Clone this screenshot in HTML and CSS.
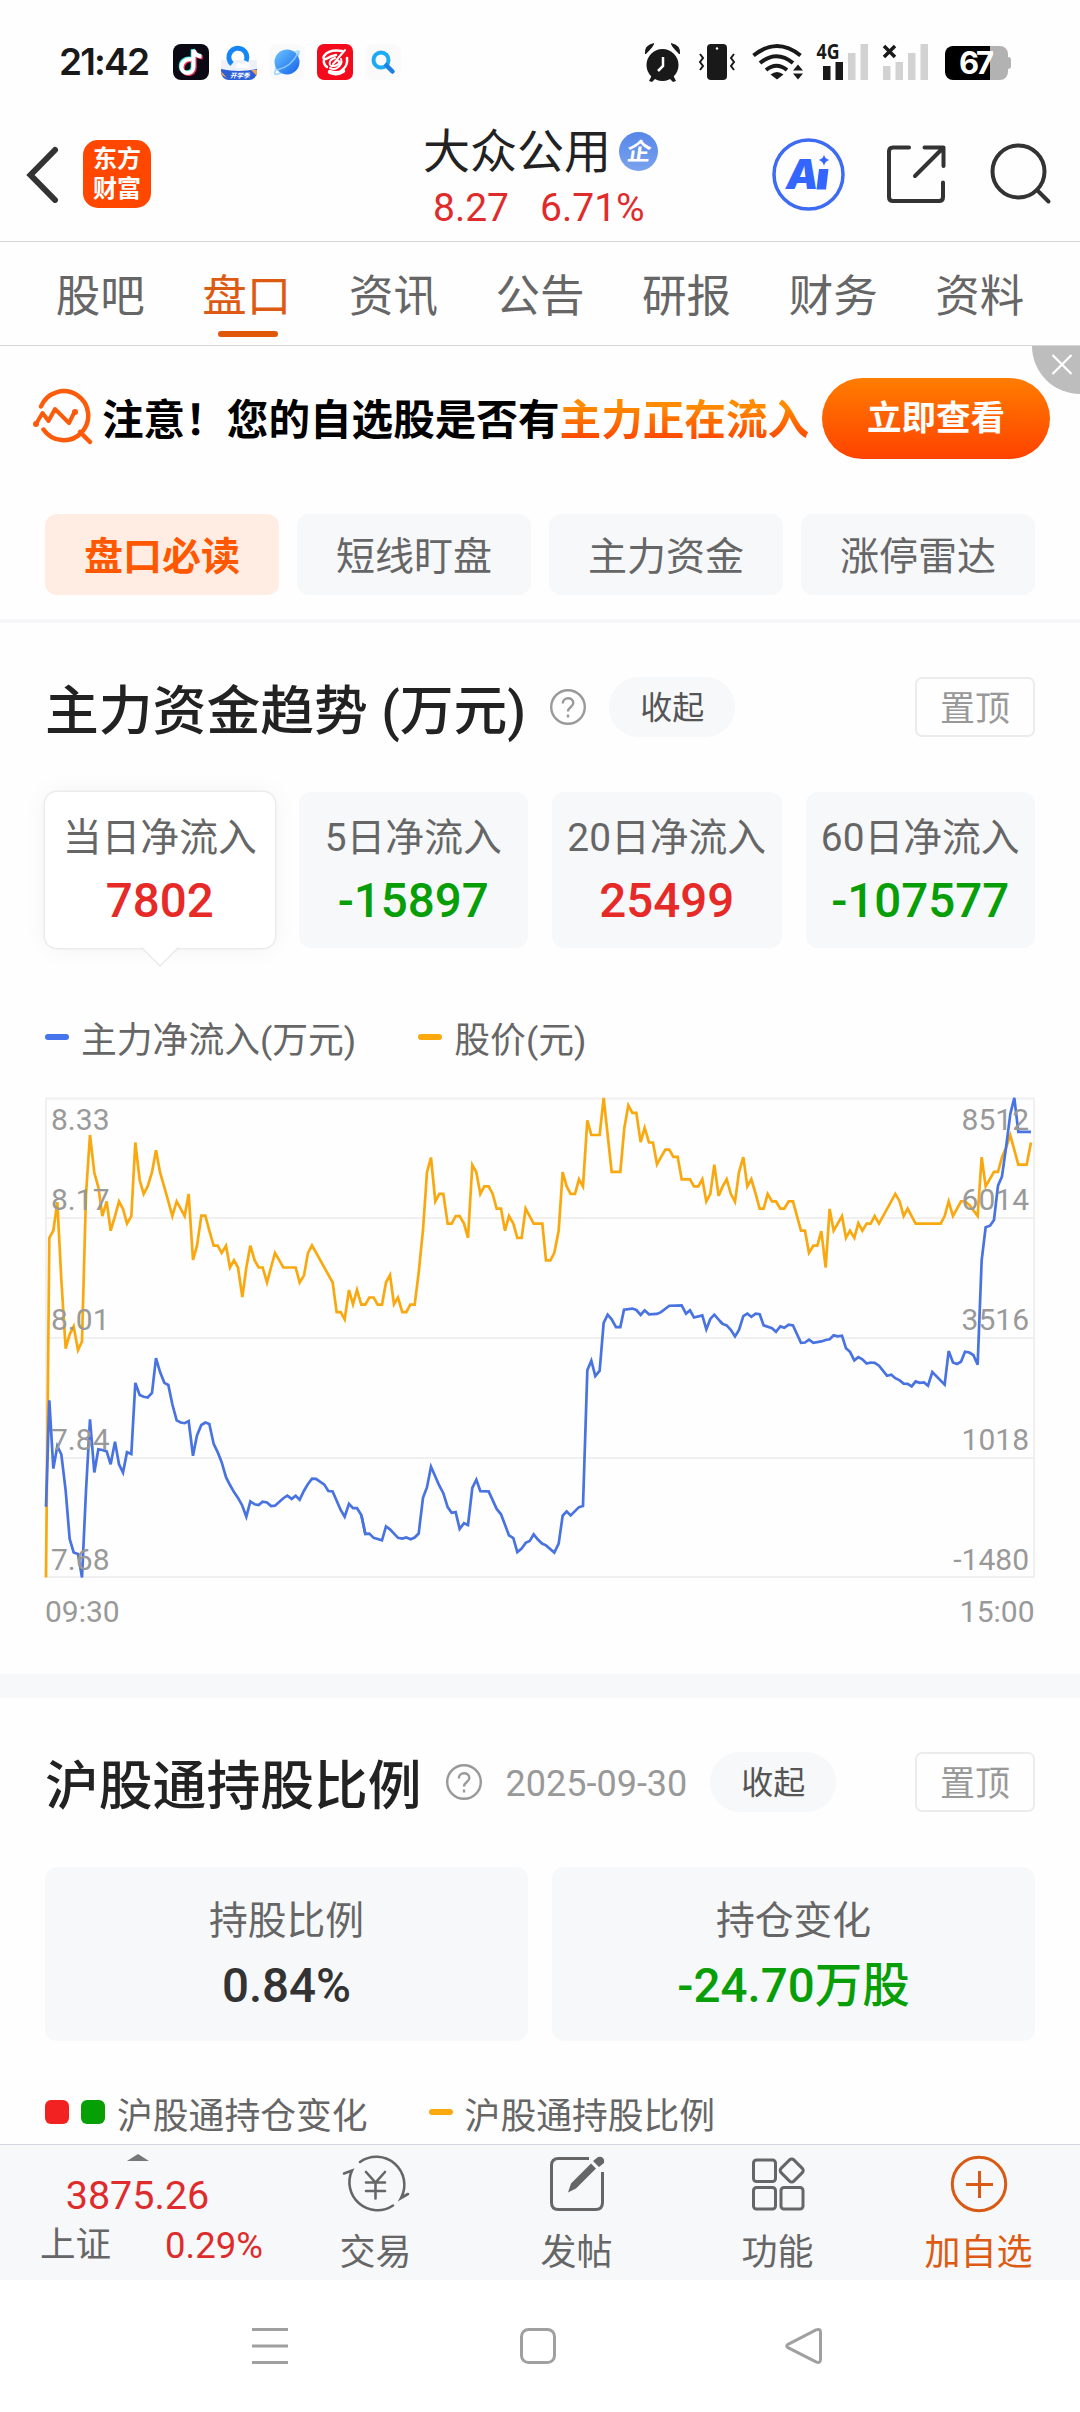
FILE: index.html
```html
<!DOCTYPE html>
<html lang="zh-CN">
<head>
<meta charset="utf-8">
<title>大众公用</title>
<link rel="stylesheet" href="styles.css">
</head>
<body>
<div class="phone">
  <div class="status">
    <span class="clock">21:42</span>
    <div class="notices">
      <svg width="36" height="36" viewBox="0 0 36 36"><rect width="36" height="36" rx="8" fill="#0b0a14"/><g fill="none" stroke-width="4"><path d="M18.500 15.500c-6-1-10 3-10 7.500 0 8 12 8 12 0V6c1 4 4 6 8 6.500" stroke="#2de0dc" transform="translate(-.8 -.8)"/><path d="M18.500 15.500c-6-1-10 3-10 7.500 0 8 12 8 12 0V6c1 4 4 6 8 6.500" stroke="#f5315a" transform="translate(1.200 1)"/><path d="M18.500 15.500c-6-1-10 3-10 7.500 0 8 12 8 12 0V6c1 4 4 6 8 6.500" stroke="#fff"/></g></svg>
      <svg width="36" height="36" viewBox="0 0 36 36"><path d="M0 16h36v12H0z" fill="#eef1f8"/><path d="M11 20a9 9 0 1 1 14-3" fill="none" stroke="#1686f5" stroke-width="5"/><path d="M15 24c-1-5 5-6 6-3 2-5 9-3 8 3z" fill="#fff"/><path d="M0 25q18 4 36 0v3a8 8 0 0 1-8 8H8a8 8 0 0 1-8-8z" fill="#2a5fd6"/><path d="M30 26l6 6v-6zM0 27l6 7-5-3z" fill="#f2a05a"/><text x="9" y="34" font-size="6.500" font-weight="700" font-style="italic" fill="#fff">开学季</text></svg>
      <svg width="36" height="36" viewBox="0 0 36 36"><defs><linearGradient id="planet" x1="0" y1="0" x2="1" y2="1"><stop offset="0" stop-color="#6cc6ff"/><stop offset="1" stop-color="#1360ea"/></linearGradient></defs><rect width="36" height="36" rx="8" fill="#fafafa"/><path d="M25 9q5-3 5-1t-4 8M8 23q-3 6-2 7t8-2" fill="none" stroke="#a9dafa" stroke-width="2"/><circle cx="18" cy="18" r="12.500" fill="url(#planet)"/><path d="M8 26Q22 23 29 9" fill="none" stroke="#8dccff" stroke-width="1.500"/></svg>
      <svg width="36" height="36" viewBox="0 0 36 36"><rect width="36" height="36" rx="7" fill="#f30a1c"/><g fill="none" stroke="#fff" stroke-linecap="round"><path d="M25 7Q12 5 7 12q-2 3 2 3 5-3 10-4" stroke-width="2.500"/><path d="M7 16q-1 4 3 7M30 14q1 8-5 12" stroke-width="2.500"/><path d="M13 28q7 3 13-1" stroke-width="4.500"/><path d="M18 14c-7 2-7 9-1 8s7-7 2-5l-3 3M28 6L17 19M24 15q2 5-4 9-3 2-7 0" stroke-width="2"/></g></svg>
      <svg width="36" height="36" viewBox="0 0 36 36"><rect width="36" height="36" rx="8" fill="#fafafa"/><circle cx="16" cy="16" r="7.500" fill="none" stroke="#1eaaf2" stroke-width="4"/><path d="M21.500 21.500l6 6" stroke="#1c7fe6" stroke-width="4.500" stroke-linecap="round"/></svg>
    </div>
    <svg class="sys" width="370" height="60" viewBox="642 32 370 60">
      <g fill="#191919"><circle cx="662.500" cy="65" r="16"/><path d="M645 54q-1-9 9-11 1 2-8 11zM680 54q1-9-9-11-1 2 8 11z"/><path d="M652 75l4 3-4 4-3-1zM673 75l-4 3 4 4 3-1z"/><rect x="707" y="44" width="20" height="36" rx="4"/></g>
      <path d="M663 57v9l-5 5" fill="none" stroke="#fff" stroke-width="2.500"/><circle cx="717" cy="48.500" r="1.200" fill="#fff"/>
      <path d="M700 54l3 4-3 4 3 4-3 4M734 54l-3 4 3 4-3 4 3 4" fill="none" stroke="#191919" stroke-width="2"/>
      <g fill="none" stroke="#191919" stroke-width="4"><path d="M753.500 55.500q23.500-19 47 0M760 63q16.500-13.500 33 0M766 70q10.500-8.500 21 0"/></g>
      <path d="M770.500 74.500q6.500-5 13 0l-6.500 5zM793 70.500l5-6 5 6zM793 73.500l5 6 5-6z" fill="#191919"/>
      <text x="816.500" y="59" class="net" textLength="23" lengthAdjust="spacingAndGlyphs">4G</text>
      <path d="M823 66h7.500v14H823zM835.500 62h7.500v18h-7.500z" fill="#191919"/>
      <path d="M848 53h7.500v27H848zM860.500 44h7.500v36h-7.500zM883 66h7.500v14H883zM895.500 62h7.500v18h-7.500zM908 53h7.500v27H908zM920.500 44h7.500v36h-7.500z" fill="#d2d2d2"/>
      <path d="M884 46l11 11M895 46l-11 11" stroke="#191919" stroke-width="3.500"/>
      <path d="M990 46h10a8 8 0 0 1 8 8v3q3 0 3 3v6q0 3-3 3v3a8 8 0 0 1-8 8h-10z" fill="#b2b2b2"/><path d="M953 46h37v34h-37a8 8 0 0 1-8-8V54a8 8 0 0 1 8-8z" fill="#000"/>
      <text x="959" y="74" class="batt" textLength="35">67</text>
    </svg>
  </div>

  <header class="head">
    <svg class="back" width="34" height="58" viewBox="0 0 34 58"><path d="M30 5L5.500 30 30 55" fill="none" stroke="#333" stroke-width="6" stroke-linecap="round"/></svg>
    <div class="app"><span>东方</span><span>财富</span></div>
    <div class="stock">
      <div class="name">大众公用<i class="corp"><b>企</b></i></div>
      <div class="price"><span>8.27</span><span>6.71%</span></div>
    </div>
    <svg class="tools" width="284" height="76" viewBox="770 136 284 76">
      <circle cx="808.500" cy="174.500" r="34.500" fill="none" stroke="#3d6bf2" stroke-width="3.500"/>
      <text x="786" y="188.500" class="ai">A</text><path d="M819 169h9.500l-2.500 20.500h-9.500zM824 154.500q1 4.500 5.500 5.500-4.500 1-5.500 6-1-5-5.500-6 4.500-1 5.500-5.500z" fill="#3366ff"/>
      <g fill="none" stroke="#333" stroke-width="4" stroke-linecap="round" stroke-linejoin="round"><path d="M909 147.500h-16q-4 0-4 4V197q0 4 4 4h46q4 0 4-4v-14.500M924.500 147.500h19V166M943 148l-28 28"/><circle cx="1018.500" cy="171.500" r="26"/><path d="M1037 190l11.500 11.500"/></g>
    </svg>
  </header>

  <nav class="tabs"><a>股吧</a><a class="on">盘口</a><a>资讯</a><a>公告</a><a>研报</a><a>财务</a><a>资料</a></nav>

  <div class="banner">
    <svg class="scan" width="62" height="60" viewBox="32 388 62 60"><g fill="none" stroke="#fa5c0c" stroke-width="4.500" stroke-linecap="round" stroke-linejoin="round"><path d="M41 407.500a24.500 24.500 0 1 1 2.500 23M80 433l10 10"/><path d="M36 425l6.500-11 6 8 6.500-12 14 14 5.500-11" stroke-width="4"/></g><g fill="#fa5c0c"><circle cx="36" cy="425" r="3"/><circle cx="75" cy="413" r="3"/></g></svg>
    <p>注意！您的自选股是否有<em>主力正在流入</em></p>
    <span class="go">立即查看</span>
    <svg class="close" width="48" height="48" viewBox="0 0 48 48"><path d="M0 0h48v48A48 48 0 0 1 0 0z" fill="#bdbdbd"/><path d="M20.500 9l19 19M39.500 9l-19 19" stroke="#fff" stroke-width="2.200"/></svg>
  </div>

  <div class="chips"><span class="on">盘口必读</span><span>短线盯盘</span><span>主力资金</span><span>涨停雷达</span></div>

  <section class="trend">
    <div class="title"><h2>主力资金趋势 (万元)</h2><svg class="help" viewBox="0 0 36 36"><circle cx="18" cy="18" r="16.800"/><path d="M12.800 14.500c0-7 10.500-7 10.500-.5 0 4-5.300 4-5.300 8.500M18 25.500v3"/></svg><span class="fold">收起</span><span class="pin">置顶</span></div>
    <div class="flows">
      <div class="card on"><label>当日净流入</label><b class="up">7802</b><svg class="tip" width="38" height="20" viewBox="0 0 38 20"><path d="M0 0h38L19 18z" fill="#fff"/><path d="M0 1l1 0 18 18L37 1h1" fill="none" stroke="#e9e9e9" stroke-width="1.300"/></svg></div>
      <div class="card"><label>5日净流入</label><b class="down">-15897</b></div>
      <div class="card"><label>20日净流入</label><b class="up">25499</b></div>
      <div class="card"><label>60日净流入</label><b class="down">-107577</b></div>
    </div>
    <div class="legend"><i class="dash blue"></i><span>主力净流入(万元)</span><i class="dash gold second"></i><span>股价(元)</span></div>
    <svg class="chart" width="1080" height="560" viewBox="0 0 1080 560">
      <path d="M45 138H1035M45 258H1035M45 378H1035M46 18.500H1034V497H46z" fill="none" stroke="#f0f0f0" stroke-width="2"/>
      <g class="line" stroke="#f9a90f" transform="scale(.33333 .35714)">
        <polyline points="138,1393 148,442 160,422 172,342 184,560 197,752 209,712 221,690 234,756 246,732 258,320 270,154 283,260 295,300 307,381 320,340 332,422 345,381 357,340 369,361 381,402 394,381 406,175 419,280 431,319 443,298 456,258 468,197 480,258 493,300 505,340 517,381 530,340 542,360 554,381 566,319 579,504 591,464 604,380 616,380 628,422 641,464 653,464 665,484 678,464 690,525 702,505 714,525 727,608 739,525 751,464 764,505 776,525 788,525 801,567 813,525 825,484 838,505 850,525 887,525 899,567 912,547 924,484 936,463 998,567 1010,650 1022,650 1034,670 1047,588 1059,628 1071,588 1084,629 1096,629"/>
        <polyline transform="translate(1080)" points="4,629 16,629 28,609 41,609 53,629 66,629 78,567 90,546 102,628 114,609 127,650 139,650 151,629 164,629 176,540 189,420 201,258 213,217 226,340 238,319 250,319 263,402 275,402 287,381 299,381 312,402 324,442 337,238 349,258 361,319 373,298 386,298 398,319 410,360 423,360 435,422 447,381 460,402 472,442 485,442 497,360 509,381 521,402 547,402 558,505 571,505 583,484 596,422 608,258 620,298 632,319 645,319 657,278 669,298 682,113 694,154 719,154 731,50 743,154 755,257 781,257 793,134 805,71 817,92 829,92 842,174 854,134 867,175 879,175 891,236 903,216 916,195 928,195 940,215 953,215 965,278 990,278 1002,298 1015,298 1027,278 1039,340 1051,319 1063,237 1076,325"/>
        <polyline transform="translate(2160)" points="-4,325 8,298 20,278 33,320 45,341 57,258 70,216 82,298 94,278 107,319 119,360 131,360 143,319 156,340 168,340 181,360 193,360 206,340 219,340 231,381 243,422 255,422 267,484 280,464 292,464 304,423 317,525 329,361 341,422 366,381 378,442 390,422 403,442 415,401 427,422 440,402 452,402 464,381 477,402 526,319 539,340 551,381 563,360 587,402 662,402 674,381 686,340 699,381 723,340 735,340 748,350 773,381 785,216 797,298 822,257 834,257 846,216 858,190 871,155 895,237 920,237 933,175"/>
      </g>
      <g class="line" stroke="#4873e0" transform="scale(.33333 .35714)">
        <polyline points="138,1195 148,897 160,1088 172,1025 184,1048 197,1150 209,1285 221,1323 234,1327 246,1393 258,1150 270,950 283,1099 295,1034 307,1036 320,1040 332,1076 345,1013 357,1076 369,1099 381,1042 394,1047 406,848 419,882 431,887 443,889 456,876 468,779 480,817 493,848 505,854 517,908 530,953 542,959 554,961 566,955 579,1052 591,995 604,966 616,959 628,963 641,1019 653,1042 665,1070 678,1112 690,1134 702,1154 714,1170 727,1192 739,1223 751,1180 764,1188 776,1190 788,1181 801,1183 813,1193 825,1192 850,1171 862,1164 875,1173 887,1164 899,1175 912,1150 924,1131 936,1116 948,1117 973,1133 985,1151 998,1152 1010,1178 1022,1204 1034,1223 1047,1187 1059,1199 1071,1199 1084,1218 1096,1271"/>
        <polyline transform="translate(1080)" points="4,1218 16,1271 28,1270 41,1282 66,1289 78,1250 90,1258 114,1282 127,1284 139,1281 152,1286 164,1281 176,1270 189,1170 201,1140 213,1083 238,1136 250,1157 263,1196 275,1212 287,1210 299,1257 312,1241 324,1246 337,1142 349,1119 361,1151 386,1152 410,1201 423,1216 435,1245 447,1275 460,1283 472,1322 484,1313 497,1296 509,1291 521,1272 533,1286 546,1298 558,1303 583,1323 596,1298 608,1220 620,1208 632,1219 657,1196 669,1193 682,813 694,786 706,829 719,814 731,680 743,657 755,670 768,692 781,692 792,643 817,640 829,644 842,658 854,645 867,656 891,655 903,650 928,632 965,631 978,654 990,645 1002,665 1027,659 1039,698 1051,669 1063,657 1080,675 1088,683"/>
        <polyline transform="translate(2160)" points="0,675 8,683 20,687 33,700 45,718 57,700 70,661 82,654 94,663 107,654 119,656 131,687 156,695 168,705 181,690 193,694 206,685 219,687 243,736 255,735 267,727 280,736 304,732 317,728 329,726 341,715 353,718 366,716 378,751 390,761 403,785 415,776 427,782 440,794 452,791 464,792 477,800 501,828 514,825 526,835 539,841 551,850 563,851 575,858 587,844 599,848 612,847 624,856 637,818 674,853 686,759 699,791 711,795 723,789 735,761 748,763 760,770 773,797 785,505 797,412 810,408 822,392 834,296 846,270 858,190 871,95 883,50 895,145 933,145"/>
      </g>
      <g class="axis"><text x="51" y="49.600">8.33</text><text x="51" y="129.600">8.17</text><text x="51" y="249.600">8.01</text><text x="51" y="369.600">7.84</text><text x="51" y="489.600">7.68</text><text x="45" y="541.800">09:30</text></g>
      <g class="axis end"><text x="1029" y="49.600">8512</text><text x="1029" y="129.600">6014</text><text x="1029" y="249.600">3516</text><text x="1029" y="369.600">1018</text><text x="1029" y="489.600">-1480</text><text x="1034.500" y="541.800">15:00</text></g>
    </svg>
  </section>

  <section class="hold">
    <div class="title"><h2>沪股通持股比例</h2><svg class="help" viewBox="0 0 36 36"><circle cx="18" cy="18" r="16.800"/><path d="M12.800 14.500c0-7 10.500-7 10.500-.5 0 4-5.300 4-5.300 8.500M18 25.500v3"/></svg><time>2025-09-30</time><span class="fold">收起</span><span class="pin">置顶</span></div>
    <div class="stats">
      <div class="card"><label>持股比例</label><b>0.84%</b></div>
      <div class="card"><label>持仓变化</label><b class="down">-24.70万股</b></div>
    </div>
    <div class="legend"><i class="sq red"></i><i class="sq green"></i><span>沪股通持仓变化</span><i class="dash gold third"></i><span>沪股通持股比例</span></div>
  </section>

  <footer class="bar">
    <div class="index"><i class="tri"></i><b>3875.26</b><p><span>上证</span><em>0.29%</em></p></div>
    <a><svg width="68" height="60" viewBox="342 2154 68 60"><g fill="none" stroke="#666" stroke-width="2.600" stroke-linecap="round"><path d="M360 2162a28 28 0 0 1 41 36l7-4M393 2205.500a28 28 0 0 1-41-35l-8 3"/><path d="M366 2172l9.500 10.500 9.500-10.500M375.500 2182v16.500M366 2182.500h19M366 2191h19"/></g></svg>交易</a>
    <a><svg width="68" height="60" viewBox="543 2154 68 60"><path d="M589 2158.500h-30.500q-7 0-7 7v37q0 7 7 7h37q7 0 7-7V2172" fill="none" stroke="#666" stroke-width="3"/><path d="M568 2192.500l3-9 20-20 5 5-20 20zM593 2161l5-4q3-1 5 1t1 5l-5 4z" fill="#666"/></svg>发帖</a>
    <a><svg width="68" height="60" viewBox="744 2154 68 60"><g fill="none" stroke="#666" stroke-width="3"><rect x="753.500" y="2160" width="22" height="21.500" rx="3"/><rect x="753.500" y="2187.500" width="22" height="21.500" rx="3"/><rect x="781" y="2187.500" width="22" height="21.500" rx="3"/><rect x="782.700" y="2161.500" width="18" height="18" rx="3" transform="rotate(45 791.700 2170.500)"/></g></svg>功能</a>
    <a class="add"><svg width="68" height="60" viewBox="945 2154 68 60"><g fill="none" stroke="#d85a14" stroke-width="3"><circle cx="979" cy="2184" r="26.700"/><path d="M966 2184.500h27M979.500 2171v27"/></g></svg>加自选</a>
  </footer>

  <div class="keys">
    <svg width="40" height="40" viewBox="0 0 40 40"><path d="M2 3.500h36M2 20h36M2 36.500h36"/></svg>
    <svg width="40" height="40" viewBox="0 0 40 40"><rect x="3.500" y="3.500" width="33" height="33" rx="7"/></svg>
    <svg width="40" height="40" viewBox="0 0 40 40"><path d="M4 18.300L32 3.800q4.500-1.500 4.500 2.500v27q0 4.500-4.500 2.500L4 21.700q-2.500-1.700 0-3.400z"/></svg>
  </div>
</div>
</body>
</html>
```
FILE: styles.css
```css
* { box-sizing: border-box; }
body { margin: 0; background: #fff; font-family: Roboto, "Noto Sans CJK SC", sans-serif; font-weight: 400; color: #666; }
svg { display: block; flex: none; }
em, i { font-style: normal; }
p, h2 { margin: 0; }
.phone { width: 1080px; height: 2412px; overflow: hidden; display: flex; flex-direction: column; background: #fefefe; }
.phone > * { flex: none; }

.status { height: 106px; padding: 18px 68px 0 59px; display: flex; align-items: center; }
.clock { font: 600 37px/44px Inter, sans-serif; width: 114px; letter-spacing: -1.8px; color: #191919; }
.notices { display: flex; gap: 12px; flex: 1; }
.net { font: 700 22px "Open Sans", sans-serif; fill: #191919; }
.batt { font: 700 31px Inter, sans-serif; fill: #fff; }

.head { height: 136px; border-bottom: 1px solid #d6d6d6; display: flex; align-items: center; padding: 0 26px 0 25px; }
.app { width: 68px; height: 68px; margin-left: 24px; border-radius: 15px; background: #ff4700; color: #fff; font-weight: 700; font-size: 24px; line-height: 30px; text-align: center; display: flex; flex-direction: column; padding-top: 4px; }
.stock { flex: 1; padding: 7px 0 0 272px; }
.name { display: flex; align-items: center; font-size: 47px; line-height: 60px; color: #222; }
.corp { width: 39px; height: 39px; border-radius: 50%; margin-left: 8px; background: linear-gradient(#5686e8, #7aa3ee); display: flex; align-items: center; justify-content: center; }
.corp b { font-size: 24px; line-height: 24px; color: #fff; transform: skewX(-8deg); }
.price { display: flex; gap: 31px; padding-left: 10px; margin-top: 1px; font-size: 39px; line-height: 50px; color: #de2c2c; }
.ai { font: 900 41px Inter, sans-serif; fill: #36f; font-style: italic; }

.tabs { height: 104px; padding: 0 27px; border-bottom: 1px solid #d6d6d6; display: grid; grid-template-columns: repeat(7, 1fr); }
.tabs a { text-align: center; font-size: 44.500px; line-height: 110px; height: 103px; position: relative; }
.tabs .on { color: #dd5a12; }
.tabs .on::after { content: ""; position: absolute; left: 44px; top: 89px; width: 60px; height: 6px; border-radius: 3px; background: #e0570a; }

.banner { height: 150px; position: relative; display: flex; align-items: center; padding: 0 30px 6px 32px; }
.banner p { margin-left: 8px; width: 720px; white-space: nowrap; font-weight: 700; font-size: 41.600px; line-height: 60px; color: #000; padding-top: 6px; }
.banner em { color: transparent; background: linear-gradient(#ff8c00 20%, #ff4b00 85%); -webkit-background-clip: text; background-clip: text; }
.scan { margin-top: -3px; }
.go { width: 228px; height: 81px; border-radius: 41px; background: linear-gradient(#ff7d00, #ff4200); color: #fff; font-weight: 700; font-size: 34.500px; line-height: 80px; text-align: center; flex: none; }
.close { position: absolute; right: 0; top: 0; }

.chips { height: 127px; border-bottom: 4px solid #f6f6f8; padding: 18px 45px 0; display: grid; grid-template-columns: repeat(4, 1fr); gap: 18px; }
.chips span { height: 81px; border-radius: 12px; background: #f7f8fa; font-size: 39px; line-height: 86px; text-align: center; }
.chips .on { background: #ffede4; color: #ff5800; font-weight: 700; }

.trend { height: 1051px; padding: 54px 45px 0; }
.title { height: 60px; display: flex; align-items: center; }
.title h2 { font-size: 53.800px; font-weight: 500; line-height: 60px; color: #222; white-space: nowrap; padding-top: 9px; }
.help { width: 36px; height: 36px; margin-left: 24px; fill: none; stroke: #999; stroke-width: 2.400; }
.fold { width: 126px; height: 60px; margin-left: 23px; border-radius: 30px; background: #f7f8fa; font-size: 32px; line-height: 63px; text-align: center; color: #555; }
.pin { width: 120px; height: 60px; margin-left: auto; border: 2px solid #ececec; border-radius: 7px; font-size: 35px; line-height: 62px; text-align: center; color: #999; }
time { margin-left: 24px; font-size: 36px; line-height: 60px; color: #999; padding-top: 4px; }
.flows { margin-top: 55px; display: grid; grid-template-columns: repeat(4, 1fr); gap: 24px; }
.card { position: relative; height: 156px; border-radius: 12px; background: #f7f8fa; display: flex; flex-direction: column; align-items: center; padding-top: 21px; white-space: nowrap; }
.card label { font-size: 38.800px; line-height: 50px; }
.card b { font-size: 47.500px; font-weight: 500; line-height: 60px; margin-top: 8px; color: #333; }
.card.on { background: #fff; box-shadow: 0 0 0 1.500px #ececec, 0 0 24px rgba(0,0,0,.05); }
.card .up { color: #e62a28; }
.card .down { color: #079e07; }
.tip { position: absolute; left: 96px; top: 155px; }
.legend { height: 50px; display: flex; align-items: center; font-size: 35.800px; }
.flows + .legend { margin-top: 64px; }
.dash { width: 24px; height: 6px; border-radius: 3px; margin-right: 12px; margin-top: -1px; }
.blue { background: #4674ec; }
.gold { background: #fba90c; }
.second { margin-left: 62px; }
.third { margin-left: 61px; margin-top: -3px; }
.chart { margin: 18px 0 0 -45px; }
.line { fill: none; stroke-width: 2.700px; }
.line polyline { vector-effect: non-scaling-stroke; }
.axis { font-size: 30px; fill: #999; }
.end { text-anchor: end; }

.hold { height: 470px; border-top: 24px solid #f7f8fa; padding: 54px 45px 0; overflow: hidden; }
.stats { margin-top: 55px; display: grid; grid-template-columns: 1fr 1fr; gap: 24px; }
.stats .card { height: 174px; padding-top: 29px; }
.stats .card b { margin-top: 10px; }
.stats + .legend { margin-top: 47px; }
.sq { width: 24px; height: 24px; border-radius: 6px; margin-right: 12px; margin-top: -2px; }
.red { background: #f22222; }
.green { background: #06a006; }

.bar { height: 136px; border-top: 1px solid #d3d6df; background: #f7f8fa; display: grid; grid-template-columns: 275px repeat(4, 201px); }
.bar a { font-size: 36px; line-height: 48px; display: flex; flex-direction: column; align-items: center; padding-top: 9px; }
.bar a svg { margin-bottom: 15px; }
.bar .add { color: #dd5a12; }
.index { padding-top: 9px; display: flex; flex-direction: column; align-items: center; }
.tri { border: 11px solid transparent; border-top: 0; border-bottom: 7px solid #777; }
.index b { font-weight: 400; font-size: 39.500px; line-height: 46px; color: #de2c2c; margin-top: 12px; }
.index p { width: 275px; display: flex; padding-left: 40px; font-size: 35.500px; line-height: 48px; margin-top: 2px; }
.index em { margin-left: 54px; font-size: 36.500px; color: #de2c2c; line-height: 50px; }

.keys { height: 132px; background: #fff; display: grid; grid-template-columns: 268px 268px 264px; padding: 46px 0 0 136px; justify-items: center; }
.keys svg { fill: none; stroke: #a0a0a0; stroke-width: 3; }
```
